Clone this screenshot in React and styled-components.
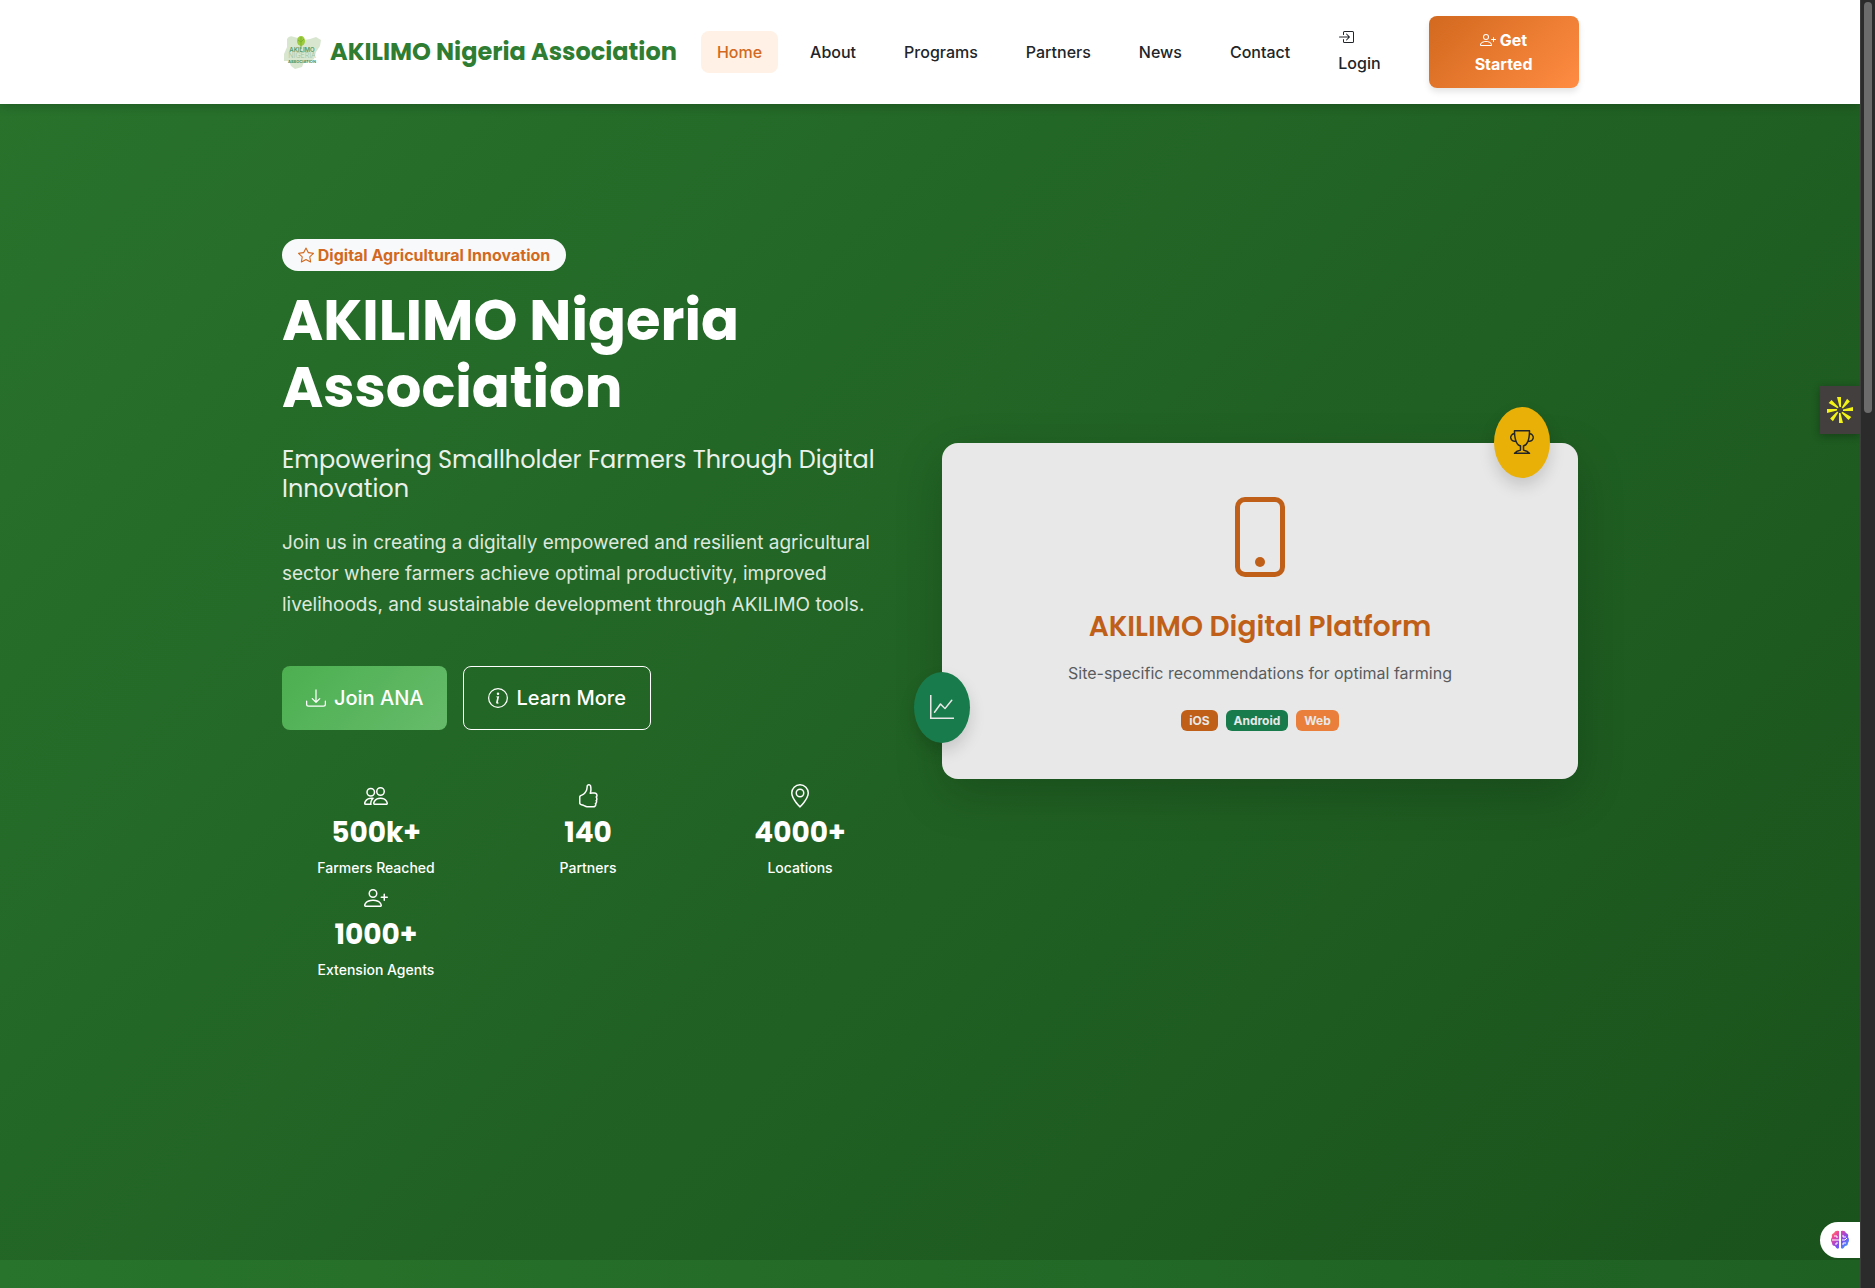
import React from "react";
import styled, { createGlobalStyle, css } from "styled-components";
import {
  BsBoxArrowInRight,
  BsDownload,
  BsGeoAlt,
  BsGraphUp,
  BsHandThumbsUp,
  BsInfoCircle,
  BsPeople,
  BsPersonPlus,
  BsPhone,
  BsStar,
  BsTrophy,
} from "react-icons/bs";

const links = ["Home", "About", "Programs", "Partners", "News", "Contact"];

const stats = [
  { icon: BsPeople, value: "500k+", label: "Farmers Reached" },
  { icon: BsHandThumbsUp, value: "140", label: "Partners" },
  { icon: BsGeoAlt, value: "4000+", label: "Locations" },
  { icon: BsPersonPlus, value: "1000+", label: "Extension Agents" },
];

const Logo = () => (
  <svg width="40" height="40" viewBox="0 0 40 40" aria-hidden="true">
    <path
      d="M5 7Q7 3 12 5L16 6L22 8L28 7L34 5L39 8L38 14L34 20L32 27L27 30L22 30L20 35L13 37L9 34L7 29L2 29L2 22L5 15Z"
      fill="#d8e6d0"
    />
    <ellipse cx="19" cy="9" rx="4" ry="5" fill="#9ccc3c" />
    <path d="M19 5v12M16 8l3 2l3-3" stroke="#7cb32e" fill="none" />
    <g fontFamily="Inter, sans-serif" textAnchor="middle">
      <text x="20" y="20" fontSize="6" fontWeight="600" fill="#4f9a68">AKILIMO</text>
      <text x="20" y="26" fontSize="7" fontWeight="300" fill="#9cc3a0">NIGERIA</text>
      <text x="20" y="31" fontSize="4" fontWeight="700" fill="#3f8f5c">ASSOCIATION</text>
    </g>
  </svg>
);

const Burst = () => (
  <svg width="28" height="28" viewBox="-14 -14 28 28" aria-hidden="true">
    {[0, 45, 90, 135, 180, 225, 270, 315].map((angle) => (
      <path
        key={angle}
        d="M-3-13L1-13L1-3L-0.5-3Z"
        fill="#f3f315"
        transform={`rotate(${angle})`}
      />
    ))}
  </svg>
);

const Brain = () => (
  <svg width="20" height="20" viewBox="0 0 20 20" aria-hidden="true">
    <defs>
      <linearGradient id="brain" x1="0" y1="0" x2="1" y2="1">
        <stop offset="0" stopColor="#ff9a3c" />
        <stop offset="0.25" stopColor="#f0439c" />
        <stop offset="0.6" stopColor="#7c4df0" />
        <stop offset="1" stopColor="#2ab4ff" />
      </linearGradient>
    </defs>
    <path
      d="M9 1Q5 0 4 3Q1 4 2 7Q0 10 2 13Q2 16 5 16Q7 20 9 18ZM11 1Q15 0 16 3Q19 4 18 7Q20 10 18 13Q18 16 15 16Q13 20 11 18Z"
      fill="url(#brain)"
    />
    <path
      d="M4 6h3v2M2 10h7M5 14h2v-2M13 5v2h3M12 10h3l2-2M13 15v-2h3"
      stroke="#fff"
      fill="none"
    />
  </svg>
);

const App = () => {
  return (
    <>
      <GlobalStyle />
      <Page>
        <Navbar>
          <Container className="nav-inner">
            <Brand href="#home">
              <Logo />
              AKILIMO Nigeria Association
            </Brand>
            <Menu>
              {links.map((link) => (
                <NavLink href={`#${link.toLowerCase()}`} key={link} $active={link === "Home"}>
                  {link}
                </NavLink>
              ))}
              <LoginLink href="#login">
                <BsBoxArrowInRight className="icon" />
                <br />
                Login
              </LoginLink>
              <GetStarted href="#register">
                <BsPersonPlus className="icon" /> Get Started
              </GetStarted>
            </Menu>
          </Container>
        </Navbar>
        <Hero>
          <Container className="hero-inner">
            <Intro>
              <Tagline>
                <BsStar className="icon" /> Digital Agricultural Innovation
              </Tagline>
              <Title>AKILIMO Nigeria Association</Title>
              <Subtitle>Empowering Smallholder Farmers Through Digital Innovation</Subtitle>
              <Lead>
                Join us in creating a digitally empowered and resilient agricultural sector where
                farmers achieve optimal productivity, improved livelihoods, and sustainable
                development through AKILIMO tools.
              </Lead>
              <Actions>
                <Action href="#join">
                  <BsDownload />
                  Join ANA
                </Action>
                <Action href="#about" $outline>
                  <BsInfoCircle />
                  Learn More
                </Action>
              </Actions>
              <Stats>
                {stats.map(({ icon: Icon, value, label }) => (
                  <Stat key={label}>
                    <Icon className="icon" />
                    <strong>{value}</strong>
                    <span>{label}</span>
                  </Stat>
                ))}
              </Stats>
            </Intro>
            <Platform>
              <BsPhone className="phone" />
              <h2>AKILIMO Digital Platform</h2>
              <p>Site-specific recommendations for optimal farming</p>
              <Badges>
                <Badge $color="#c06018">iOS</Badge>
                <Badge $color="#187b4c">Android</Badge>
                <Badge $color="#e97f3b">Web</Badge>
              </Badges>
              <Float $place="trophy">
                <BsTrophy />
              </Float>
              <Float $place="graph">
                <BsGraphUp />
              </Float>
            </Platform>
          </Container>
        </Hero>
        <NextSection />
      </Page>
      <SideTab type="button" aria-label="Assistant">
        <Burst />
      </SideTab>
      <SideTab type="button" aria-label="AI tools" $light>
        <Brain />
      </SideTab>
      <ScrollTrack>
        <ScrollThumb />
      </ScrollTrack>
    </>
  );
};

const heading = css`
  font-family: Poppins, Inter, sans-serif;
`;

const GlobalStyle = createGlobalStyle`
  * {
    box-sizing: border-box;
  }
  html {
    scrollbar-width: none;
  }
  body {
    margin: 0;
    font-family: Inter, sans-serif;
    font-size: 16px;
    line-height: 26px;
    color: #212529;
  }
  #root {
    display: flex;
    min-height: 100vh;
  }
  h1, h2, p {
    margin: 0;
  }
  a {
    text-decoration: none;
  }
`;

const Page = styled.div`
  flex: 1;
  display: flex;
  flex-direction: column;
  margin-right: 15px;
`;

const Container = styled.div`
  width: 100%;
  max-width: 1320px;
  margin: 0 auto;
  padding: 0 12px;
  &.nav-inner {
    display: flex;
    align-items: center;
    justify-content: space-between;
    gap: 24px;
  }
  &.hero-inner {
    display: grid;
    grid-template-columns: 1fr 1fr;
    gap: 24px;
    align-items: center;
  }
`;

const Navbar = styled.header`
  position: relative;
  z-index: 1;
  background: #ffffff;
  padding: 16px 0;
  box-shadow: 0 2px 10px rgba(0, 0, 0, 0.2);
`;

const Brand = styled.a`
  ${heading}
  display: flex;
  align-items: center;
  gap: 8px;
  font-size: 24px;
  font-weight: 700;
  color: #2e7d32;
  white-space: nowrap;
`;

const Menu = styled.nav`
  display: flex;
  align-items: center;
  gap: 16px;
`;

const NavLink = styled.a`
  padding: 8px 16px;
  border-radius: 8px;
  font-weight: 500;
  color: ${({ $active }) => ($active ? "#d2691e" : "#212529")};
  background: ${({ $active }) => ($active ? "#fff1e6" : "transparent")};
`;

const LoginLink = styled(NavLink)`
  padding-bottom: 12px;
  .icon {
    vertical-align: -2px;
  }
`;

const GetStarted = styled.a`
  width: 150px;
  margin-left: 16px;
  padding: 12px 32px;
  border-radius: 8px;
  font-weight: 700;
  line-height: 24px;
  text-align: center;
  color: #ffffff;
  background: linear-gradient(135deg, #d2691e, #ff8c42);
  box-shadow: 0 4px 6px rgba(0, 0, 0, 0.1);
  .icon {
    vertical-align: -2px;
  }
`;

const Hero = styled.main`
  padding: 135px 0 278px;
  background: linear-gradient(135deg, #28722c, #1a531c);
`;

const Intro = styled.section`
  padding-right: 24px;
`;

const Tagline = styled.span`
  display: inline-block;
  padding: 8px 16px;
  border-radius: 16px;
  font-weight: 700;
  line-height: 16px;
  color: #d2691e;
  background: #f8f9fa;
  .icon {
    vertical-align: -2px;
  }
`;

const Title = styled.h1`
  ${heading}
  margin-top: 16px;
  font-size: 56px;
  font-weight: 700;
  line-height: 67px;
  color: #ffffff;
`;

const Subtitle = styled.p`
  ${heading}
  margin-top: 24px;
  font-size: 24px;
  line-height: 29px;
  color: #eaf1ea;
`;

const Lead = styled.p`
  margin-top: 24px;
  font-size: 19px;
  line-height: 31px;
  color: #dde8de;
`;

const Actions = styled.div`
  display: flex;
  gap: 16px;
  margin-top: 46px;
`;

const Action = styled.a`
  display: flex;
  align-items: center;
  gap: 8px;
  height: 64px;
  padding: 0 24px;
  border: ${({ $outline }) => ($outline ? "1px solid #ffffff" : "none")};
  border-radius: 8px;
  font-size: 20px;
  font-weight: 500;
  color: #ffffff;
  background: ${({ $outline }) =>
    $outline ? "transparent" : "linear-gradient(135deg, #4caf50, #66bb6a)"};
`;

const Stats = styled.div`
  display: grid;
  grid-template-columns: repeat(3, 1fr);
  gap: 0 24px;
  margin-top: 48px;
`;

const Stat = styled.div`
  display: flex;
  flex-direction: column;
  align-items: center;
  padding-top: 6px;
  color: #ffffff;
  .icon {
    font-size: 24px;
  }
  strong {
    ${heading}
    margin-top: 8px;
    font-size: 28px;
    line-height: 34px;
  }
  span {
    margin-top: 6px;
    font-size: 14px;
    font-weight: 500;
    line-height: 24px;
  }
`;

const Platform = styled.section`
  position: relative;
  display: flex;
  flex-direction: column;
  align-items: center;
  padding: 54px 48px 48px;
  border-radius: 16px;
  text-align: center;
  background: #e8e8e8;
  box-shadow: 0 16px 48px rgba(0, 0, 0, 0.18);
  .phone {
    font-size: 80px;
    color: #c06018;
  }
  h2 {
    ${heading}
    margin-top: 32px;
    font-size: 28px;
    font-weight: 600;
    line-height: 35px;
    color: #c06018;
  }
  p {
    margin-top: 16px;
    color: #595c5f;
  }
`;

const Badges = styled.div`
  display: flex;
  gap: 8px;
  margin-top: 24px;
`;

const Badge = styled.span`
  padding: 4px 8px;
  border-radius: 6px;
  font-size: 12px;
  font-weight: 700;
  line-height: 13px;
  color: #e8e8e8;
  background: ${({ $color }) => $color};
`;

const Float = styled.div`
  position: absolute;
  display: flex;
  align-items: center;
  justify-content: center;
  width: 56px;
  height: 71px;
  border-radius: 50%;
  font-size: 24px;
  box-shadow: 0 8px 16px rgba(0, 0, 0, 0.15);
  ${({ $place }) =>
    $place === "trophy"
      ? css`
          top: -36px;
          right: 28px;
          color: #212529;
          background: #e9b008;
        `
      : css`
          bottom: 36px;
          left: -28px;
          color: #e8e8e8;
          background: #187b4c;
        `}
`;

const NextSection = styled.section`
  flex: 1;
  background: linear-gradient(90deg, #28742c, #1e6022);
`;

const SideTab = styled.button`
  position: fixed;
  right: 15px;
  display: flex;
  align-items: center;
  justify-content: center;
  width: 40px;
  padding: 0;
  border: none;
  ${({ $light }) =>
    $light
      ? css`
          bottom: 30px;
          height: 36px;
          border-radius: 18px 0 0 18px;
          background: #ffffff;
        `
      : css`
          top: 386px;
          height: 48px;
          background: #433f3e;
          box-shadow: 0 2px 8px rgba(0, 0, 0, 0.3);
        `}
`;

const ScrollTrack = styled.div`
  position: fixed;
  z-index: 2;
  top: 0;
  right: 0;
  bottom: 0;
  width: 15px;
  padding: 2px 3px;
  border-left: 1px solid #3d3d3d;
  background: #2b2b2b;
`;

const ScrollThumb = styled.div`
  width: 8px;
  height: 32%;
  border-radius: 4px;
  background: #6b6b6b;
`;

export default App;
